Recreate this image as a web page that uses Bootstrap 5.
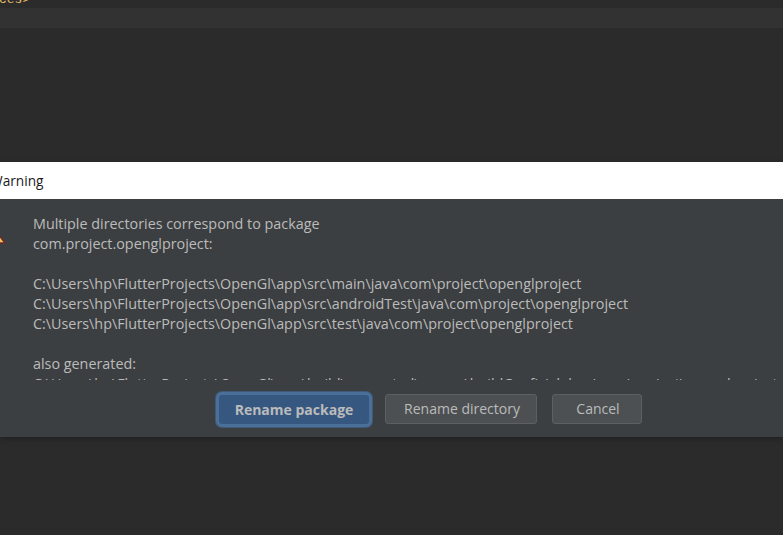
<!DOCTYPE html>
<html lang="en"><head><meta charset="utf-8"><title>Warning</title>
<link href="https://cdn.jsdelivr.net/npm/bootstrap@5.3.0/dist/css/bootstrap.min.css" rel="stylesheet">
<style>
html,body{height:535px;overflow:hidden;background:#2b2b2b;font-family:"Open Sans","Noto Sans",sans-serif;}
.editor-top{height:162px;background:#2b2b2b;}
.code-end{height:8px;overflow:hidden;color:#e8bf6a;font:13px/8px "Liberation Mono",monospace;margin-top:0;}
.code-end span{display:block;margin-top:-7px;margin-left:-1px;line-height:14px;}
.caret-line{height:20px;background:#323232;}
.dlg{height:275px;background:#3c3f41;box-shadow:0 2px 6px rgba(0,0,0,.25);}
.dlg-title{height:37px;background:#fff;color:#1a1a1a;font-size:13.7px;line-height:37px;white-space:nowrap;margin:0;}
.dlg-title span{display:block;margin-left:-10px;}
.dlg-body{height:238px;position:relative;}
.warn-ico{position:absolute;left:-9px;top:34px;}
.dlg-msg{height:181px;overflow:hidden;margin-left:33px;padding-top:15px;color:#bbb;font-size:14.35px;line-height:20px;white-space:nowrap;}
.dlg-actions{height:35px;margin-left:216px;margin-top:12px;}
.btn-ij{height:30px;margin-top:2px;padding:0 0 0 2px;font-size:14px;line-height:28px;color:#bbb;background:#4c5052;border:1px solid #5e6060;border-radius:3px;}
.btn-ij:hover{color:#bbb;background:#4c5052;border-color:#5e6060;}
.btn-ij-main{height:35px;margin-top:0;width:156px;padding:0;font-weight:700;line-height:29px;background:#365880;border:3px solid #4a6f99;box-shadow:0 0 0 1px #3f5a78;border-radius:6px;}
.btn-ij-main:hover{background:#365880;border-color:#4a6f99;color:#bbb;}
.w-dir{width:152px;margin-left:13px;}
.w-can{width:90px;margin-left:15px;}
</style></head>
<body>
<div class="editor-top">
<div class="code-end"><span>ces&gt;</span></div>
<div class="caret-line"></div>
</div>
<div class="dlg">
<div class="dlg-title"><span>Warning</span></div>
<div class="dlg-body">
<svg class="warn-ico" width="15" height="11" viewBox="0 0 15 11"><path d="M7 1 14 10H0Z" fill="#f2c55c" stroke="#6b2b2b" stroke-width="1.5"/></svg>
<div class="dlg-msg">Multiple directories correspond to package<br>com.project.openglproject:<br><br>C:\Users\hp\FlutterProjects\OpenGl\app\src\main\java\com\project\openglproject<br>C:\Users\hp\FlutterProjects\OpenGl\app\src\androidTest\java\com\project\openglproject<br>C:\Users\hp\FlutterProjects\OpenGl\app\src\test\java\com\project\openglproject<br><br>also generated:<br>C:\Users\hp\FlutterProjects\OpenGl\app\build\generated\source\buildConfig\debug\com\project\openglproject</div>
<div class="dlg-actions d-flex">
<button type="button" class="btn btn-ij btn-ij-main">Rename package</button>
<button type="button" class="btn btn-ij w-dir">Rename directory</button>
<button type="button" class="btn btn-ij w-can">Cancel</button>
</div>
</div>
</div>
</body></html>
